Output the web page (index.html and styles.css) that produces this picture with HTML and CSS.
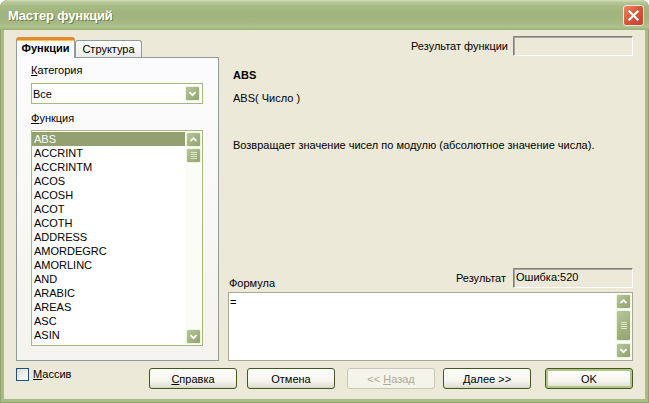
FILE: index.html
```html
<!DOCTYPE html>
<html lang="ru">
<head>
    <meta charset="UTF-8">
    <title>Мастер функций</title>
    <link rel="stylesheet" href="styles.css">
</head>
<body>
    <div class="window">
        <div class="titlebar">
            <span class="title">Мастер функций</span>
            <span class="close-btn">
                <svg width="21" height="21" viewBox="0 0 21 21">
                    <path d="M6 6L15 15M15 6L6 15" stroke="#fff" stroke-width="2.4" stroke-linecap="square"/>
                </svg>
            </span>
        </div>

        <div class="client">
            <div class="main">
                <!-- left: tabs with category and function list -->
                <div class="left">
                    <div class="tabs">
                        <div class="tab tab-active">Функции</div>
                        <div class="tab">Структура</div>
                    </div>
                    <div class="tab-page">
                        <div class="label"><u>К</u>атегория</div>
                        <div class="combo">
                            <span class="combo-text">Все</span>
                            <span class="sb-btn combo-btn">
                                <svg width="15" height="15" viewBox="0 0 15 15"><polyline points="4,6 7.5,9.5 11,6" fill="none" stroke="#fff" stroke-width="2"/></svg>
                            </span>
                        </div>
                        <div class="label label-func"><u>Ф</u>ункция</div>
                        <div class="listbox">
                            <ul class="items">
                                <li class="selected">ABS</li>
                                <li>ACCRINT</li>
                                <li>ACCRINTM</li>
                                <li>ACOS</li>
                                <li>ACOSH</li>
                                <li>ACOT</li>
                                <li>ACOTH</li>
                                <li>ADDRESS</li>
                                <li>AMORDEGRC</li>
                                <li>AMORLINC</li>
                                <li>AND</li>
                                <li>ARABIC</li>
                                <li>AREAS</li>
                                <li>ASC</li>
                                <li>ASIN</li>
                            </ul>
                            <div class="vscroll">
                                <span class="sb-btn">
                                    <svg width="15" height="15" viewBox="0 0 15 15"><polyline points="4,9.5 7.5,6 11,9.5" fill="none" stroke="#fff" stroke-width="2"/></svg>
                                </span>
                                <span class="sb-btn thumb"><span class="grip"></span></span>
                                <span class="track"></span>
                                <span class="sb-btn">
                                    <svg width="15" height="15" viewBox="0 0 15 15"><polyline points="4,6 7.5,9.5 11,6" fill="none" stroke="#fff" stroke-width="2"/></svg>
                                </span>
                            </div>
                        </div>
                    </div>
                </div>

                <!-- right: function info and formula -->
                <div class="right">
                    <div class="result-row">
                        <span>Результат функции</span>
                        <div class="readonly"></div>
                    </div>
                    <div class="fn-name">ABS</div>
                    <div class="fn-sig">ABS( Число )</div>
                    <div class="fn-desc">Возвращает значение чисел по модулю (абсолютное значение числа).</div>

                    <div class="formula-area">
                        <div class="formula-head">
                            <span class="formula-label">Формула</span>
                            <span class="result-label">Результат</span>
                            <div class="readonly">Ошибка:520</div>
                        </div>
                        <div class="formula-box">
                            <div class="formula-text">=</div>
                            <div class="vscroll">
                                <span class="sb-btn">
                                    <svg width="15" height="15" viewBox="0 0 15 15"><polyline points="4,9.5 7.5,6 11,9.5" fill="none" stroke="#fff" stroke-width="2"/></svg>
                                </span>
                                <span class="sb-btn thumb thumb-tall"><span class="grip"></span></span>
                                <span class="track"></span>
                                <span class="sb-btn">
                                    <svg width="15" height="15" viewBox="0 0 15 15"><polyline points="4,6 7.5,9.5 11,6" fill="none" stroke="#fff" stroke-width="2"/></svg>
                                </span>
                            </div>
                        </div>
                    </div>
                </div>
            </div>

            <div class="footer">
                <label class="check"><span class="checkbox"></span><span><u>М</u>ассив</span></label>
                <div class="buttons">
                    <button class="btn"><u>С</u>правка</button>
                    <button class="btn btn-cancel">Отмена</button>
                    <button class="btn btn-back" disabled>&lt;&lt; <u>Н</u>азад</button>
                    <button class="btn btn-next"><u>Д</u>алее &gt;&gt;</button>
                    <button class="btn btn-ok">OK</button>
                </div>
            </div>
        </div>
    </div>
</body>
</html>
```

FILE: styles.css
```css
/* XP olive dialog */
body {
    margin: 0;
    background: #ffffff;
    font-family: "Liberation Sans", Arial, sans-serif;
    font-size: 11px;
    color: #000;
}

.window {
    width: 649px;
    height: 403px;
    box-sizing: border-box;
    display: flex;
    flex-direction: column;
    background: #a9bc88;
    border-radius: 8px 8px 0 0;
    box-shadow: inset 0 0 0 1px #8ea46c;
}

/* Title bar */
.titlebar {
    height: 30px;
    flex-shrink: 0;
    display: flex;
    align-items: center;
    justify-content: space-between;
    padding: 0 5px 0 8px;
    border-radius: 8px 8px 0 0;
    background: linear-gradient(to bottom,
        #d4dfba 0px, #b9ca9a 2px, #a8ba84 6px, #9fb37a 14px,
        #a5b881 22px, #b0c28e 27px, #9aaf76 30px);
}

.title {
    color: #fff;
    font-weight: bold;
    font-size: 13px;
    text-shadow: 1px 1px 0 #6f8048;
    letter-spacing: -0.2px;
    padding-top: 1px;
}

.close-btn {
    width: 21px;
    height: 21px;
    box-sizing: border-box;
    border-radius: 3px;
    border: 1px solid #f2e4da;
    background: linear-gradient(135deg, #e98a68 0%, #d4573a 50%, #c0452c 100%);
    display: flex;
    align-items: center;
    justify-content: center;
    margin-top: 1px;
}

.close-btn svg {
    width: 19px;
    height: 19px;
}

/* Client area */
.client {
    flex: 1;
    margin: 0 4px 4px;
    background: #ece9d8;
    display: flex;
    flex-direction: column;
}

.main {
    display: flex;
    height: 331px;
    box-sizing: border-box;
    padding: 6px 12px 0 12px;
}

/* Left column: tabs */
.left {
    width: 203px;
    margin-top: 1px;
    display: flex;
    flex-direction: column;
}

.tabs {
    display: flex;
    align-items: flex-end;
    height: 20px;
    position: relative;
    z-index: 1;
}

.tab {
    box-sizing: border-box;
    width: 67px;
    height: 17px;
    border: 1px solid #919b9c;
    border-bottom: none;
    border-radius: 3px 3px 0 0;
    background: linear-gradient(#ffffff, #ecebe6);
    text-align: center;
    line-height: 13px;
    padding-top: 2px;
}

.tab-active {
    width: 59px;
    height: 21px;
    margin-bottom: -1px;
    border-top: 3px solid #e68b2c;
    box-shadow: inset 0 1px 0 #ffc73c;
    background: #fcfcfe;
    font-weight: bold;
    padding-top: 2px;
}

.tab-page {
    flex: 1;
    border: 1px solid #919b9c;
    background: linear-gradient(#fcfcfe, #f4f3ee);
    padding: 6px 15px 0 14px;
}

.label {
    line-height: 13px;
}

.label-func {
    margin-top: 8px;
}

.combo {
    margin-top: 6px;
    height: 21px;
    box-sizing: border-box;
    border: 1px solid #a5b97c;
    background: #fff;
    display: flex;
    align-items: center;
    justify-content: space-between;
    padding: 0 2px 0 1px;
}

.combo-text {
    padding-top: 1px;
}

/* Scroll buttons */
.sb-btn {
    width: 15px;
    height: 15px;
    box-sizing: border-box;
    border: 1px solid #eef2e3;
    border-radius: 2px;
    background: linear-gradient(135deg, #b9c79a 0%, #a2b27f 55%, #93a470 100%);
    display: flex;
    align-items: center;
    justify-content: center;
    flex-shrink: 0;
}

.sb-btn svg {
    width: 13px;
    height: 13px;
}

.listbox {
    margin-top: 5px;
    height: 216px;
    box-sizing: border-box;
    border: 1px solid #a5b97c;
    background: #fff;
    display: flex;
}

.items {
    list-style: none;
    margin: 0;
    padding: 1px 0 0;
    flex: 1;
}

.items li {
    height: 14px;
    line-height: 14px;
    padding-left: 2px;
}

.items .selected {
    background: #93a070;
    color: #fff;
}

.vscroll {
    width: 17px;
    box-sizing: border-box;
    padding: 1px;
    display: flex;
    flex-direction: column;
    background: #fbfbf8;
}

.thumb {
    margin-top: 1px;
}

.thumb-tall {
    height: 31px;
}

.grip {
    width: 6px;
    height: 7px;
    background: repeating-linear-gradient(to bottom, #dfe6cf 0 1px, transparent 1px 2px);
}

.track {
    flex: 1;
}

/* Right column */
.right {
    flex: 1;
    display: flex;
    flex-direction: column;
}

.result-row {
    display: flex;
    justify-content: flex-end;
    align-items: center;
    gap: 5px;
    height: 20px;
}

.readonly {
    width: 120px;
    height: 20px;
    box-sizing: border-box;
    border: 1px solid;
    border-color: #7f7f7f #ffffff #ffffff #7f7f7f;
    box-shadow: inset 1px 1px 0 #a8a69a;
    background: #ece9d8;
    line-height: 17px;
    padding-left: 2px;
}

.fn-name,
.fn-sig,
.fn-desc {
    line-height: 13px;
    padding-left: 14px;
}

.fn-name {
    margin-top: 13px;
    font-weight: bold;
}

.fn-sig {
    margin-top: 10px;
}

.fn-desc {
    margin-top: 34px;
}

.formula-area {
    margin-top: auto;
    margin-left: 9px;
}

.formula-head {
    display: flex;
    align-items: center;
    height: 20px;
}

.formula-label {
    align-self: flex-end;
    margin-bottom: -2px;
    padding-left: 1px;
    line-height: 13px;
    margin-right: auto;
}

.result-label {
    margin-right: 7px;
}

.formula-box {
    margin-top: 4px;
    height: 69px;
    box-sizing: border-box;
    border: 1px solid #a7a995;
    background: #fff;
    display: flex;
}

.formula-text {
    flex: 1;
    padding: 3px 0 0 1px;
    line-height: 13px;
}

.formula-box .vscroll {
    padding-bottom: 2px;
}

/* Footer */
.footer {
    flex: 1;
    display: flex;
    align-items: flex-start;
    padding: 7px 12px 0 12px;
}

.check {
    width: 133px;
    display: flex;
    align-items: center;
    gap: 4px;
    line-height: 13px;
}

.checkbox {
    width: 13px;
    height: 13px;
    box-sizing: border-box;
    border: 1px solid #1c5180;
    background: linear-gradient(135deg, #dcdcd7 0%, #f2f2ee 60%, #ffffff 100%);
}

.buttons {
    display: flex;
}

.btn {
    width: 88px;
    height: 21px;
    box-sizing: border-box;
    border: 1px solid #3e5a20;
    border-radius: 3px;
    background: linear-gradient(#ffffff 0%, #f6f5f0 60%, #e6e3d6 90%, #d6d0c5 100%);
    font-family: inherit;
    font-size: 11px;
    color: #000;
    padding: 1px 0 0;
    margin: 0;
}

.btn-cancel {
    margin-left: 10px;
}

.btn-back {
    margin-left: 12px;
    border-color: #c9c7ba;
    background: #f5f4ea;
    color: #aca899;
}

.btn-next {
    margin-left: 8px;
}

.btn-ok {
    margin-left: 14px;
    box-shadow: inset 0 0 0 2px #b2c68a;
}
```
